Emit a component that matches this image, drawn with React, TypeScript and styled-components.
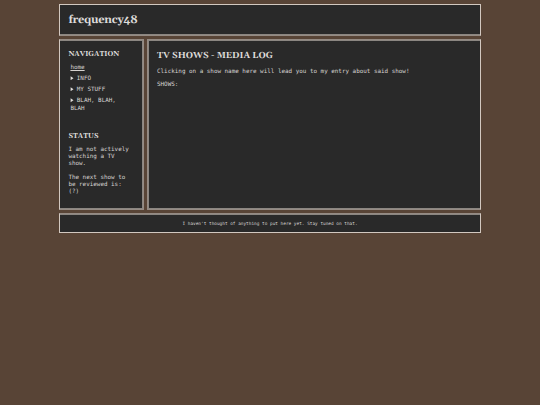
import React from "react";
import styled, { createGlobalStyle } from "styled-components";

const Global = createGlobalStyle`
  * { box-sizing: border-box; }
  html, body { margin: 0; background: #584436; }
  body {
    color: #d6d3d1;
    font: 5.91px/7px "DejaVu Sans Mono", monospace;
    text-rendering: geometricPrecision;
    overflow: hidden;
  }
`;

const Page = styled.div`
  width: 422px;
  margin: 4px 0 0 59px;
  display: flex;
  flex-direction: column;
`;

const Panel = styled.div`
  background: #292929;
  border: 1px solid #d2c8c0;
`;

const Header = styled(Panel).attrs({ as: "header" })`
  height: 32px;
  padding: 8px 8.4px 0;
  border-bottom-color: #958b84;
  box-shadow: inset 0 -1px #8b8681;
`;

const SiteTitle = styled.h1`
  margin: 0;
  font: bold 11.1px/15px Gelasio, Georgia, serif;
  letter-spacing: -0.26px;
  color: #dedcda;
`;

const Columns = styled.div`
  display: grid;
  grid-template-columns: 85px 334px;
  column-gap: 3px;
  height: 171px;
  margin: 3px 0;
`;

const Sidebar = styled(Panel).attrs({ as: "aside" })`
  padding: 10.6px 8.4px 0;
  border-color: #958b84 #958b84 #958b84 #d2c8c0;
  box-shadow: inset -1px -1px #8b8681, inset 0 1px #8b8681;
`;

const Main = styled(Panel).attrs({ as: "main" })`
  padding: 11px 9px 0;
  border-color: #958b84 #d2c8c0 #958b84 #958b84;
  box-shadow: inset 1px 1px #8b8681, inset 0 -1px #8b8681;
`;

const SideHeading = styled.h3`
  margin: 0;
  font: bold 7.1px/8px Gelasio, Georgia, serif;
  color: #dedcda;
`;

const MainHeading = styled.h2`
  margin: 0 0 7px;
  font: bold 8.85px/11px Gelasio, Georgia, serif;
  color: #dedcda;
`;

const NavList = styled.nav`
  display: flex;
  flex-direction: column;
  gap: 4px;
  padding: 6px 8px 0 2px;
  height: 74.4px;
`;

const HomeLink = styled.a`
  color: inherit;
  text-decoration: underline;
`;

const NavGroup = styled.div``;

const Marker = styled.svg`
  width: 4px;
  height: 4.4px;
  margin-right: 2.4px;
  vertical-align: 0;
  fill: #e2dfdd;
`;

const Text = styled.p`
  margin: 6.3px 0 0;
`;

const MainText = styled.p`
  margin: 0 0 6.2px;
`;

const Footer = styled(Panel).attrs({ as: "footer" })`
  height: 20px;
  padding-top: 7px;
  text-align: center;
  font-size: 4.43px;
  border-top-color: #958b84;
  box-shadow: inset 0 1px #8b8681;
`;

const groups = ["INFO", "MY STUFF", "BLAH, BLAH, BLAH"];

export default function App() {
  return (
    <>
      <Global />
      <Page>
        <Header>
          <SiteTitle>frequency48</SiteTitle>
        </Header>
        <Columns>
          <Sidebar>
            <SideHeading>NAVIGATION</SideHeading>
            <NavList>
              <HomeLink>home</HomeLink>
              {groups.map((name) => (
                <NavGroup key={name}>
                  <Marker viewBox="0 0 4 5">
                    <path d="M0.4 0.2 L3.7 2.5 L0.4 4.8 Z" />
                  </Marker>
                  {name}
                </NavGroup>
              ))}
            </NavList>
            <SideHeading>STATUS</SideHeading>
            <Text>I am not actively watching a TV show.</Text>
            <Text>The next show to be reviewed is: (?)</Text>
          </Sidebar>
          <Main>
            <MainHeading>TV SHOWS - MEDIA LOG</MainHeading>
            <MainText>Clicking on a show name here will lead you to my entry about said show!</MainText>
            <MainText>SHOWS:</MainText>
          </Main>
        </Columns>
        <Footer>I haven't thought of anything to put here yet. Stay tuned on that.</Footer>
      </Page>
    </>
  );
}
